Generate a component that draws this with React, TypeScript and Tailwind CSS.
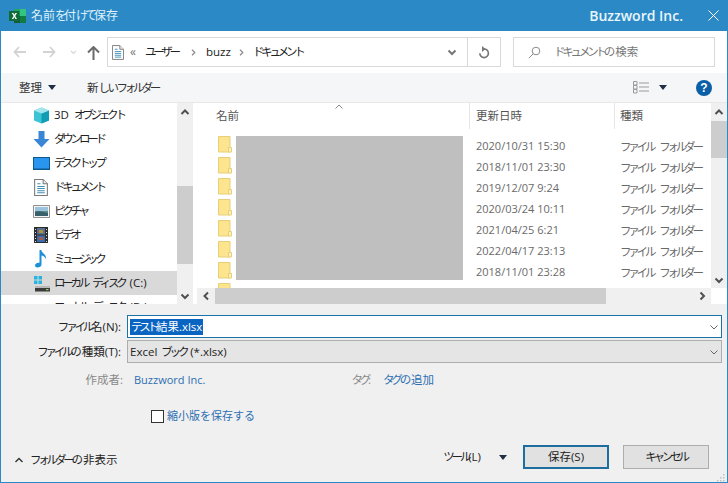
import React from 'react';

const rows = [
  '2020/10/31 15:30',
  '2018/11/01 23:30',
  '2019/12/07 9:24',
  '2020/03/24 10:11',
  '2021/04/25 6:21',
  '2022/04/17 23:13',
  '2018/11/01 23:28',
];

// Katakana in the original UI font is much narrower than in Noto, so squeeze those runs
const Jp = ({ children }: { children: string }) => (
  <>
    {children.split(/([\u30A0-\u30FF]+)/).map((part, i) =>
      i % 2 === 1 ? (
        <span key={i} className="tracking-[-3.2px]">{part}</span>
      ) : (
        <span key={i}>{part}</span>
      )
    )}
  </>
);

const Caret = ({ className = '' }: { className?: string }) => (
  <svg width="8" height="5" viewBox="0 0 8 5" className={className}>
    <path d="M0 0h8L4 5z" fill="#1f2f45" />
  </svg>
);

const Chevron = ({ dir, color = '#505050', width = 2 }: { dir: 'up' | 'down' | 'left' | 'right'; color?: string; width?: number }) => {
  const d = {
    up: 'M1.5 7 L5 3.5 L8.5 7',
    down: 'M1.5 3.5 L5 7 L8.5 3.5',
    left: 'M7 1.5 L3.5 5 L7 8.5',
    right: 'M3.5 1.5 L7 5 L3.5 8.5',
  }[dir];
  return (
    <svg width="10" height="10" viewBox="0 0 10 10">
      <path d={d} fill="none" stroke={color} strokeWidth={width} />
    </svg>
  );
};

const Crumb = () => (
  <svg width="5" height="7" viewBox="0 0 5 7">
    <path d="M1 .8 3.800 3.500 1 6.200" fill="none" stroke="#8a8a8a" strokeWidth="1.200" />
  </svg>
);

const DocIcon = ({ size = 14 }: { size?: number }) => (
  <svg width={size} height={size + 3} viewBox="0 0 13 16">
    <path d="M.5.5h8l4 4v11H.5z" fill="#fff" stroke="#7a7a7a" />
    <path d="M8.5.5v4h4" fill="#eee" stroke="#7a7a7a" />
    <path d="M3 4.5h3M3 7h7M3 9h7M3 11h7M3 13h7" stroke="#3f8fb5" />
  </svg>
);

const FolderIcon = () => (
  <svg width="14" height="17" viewBox="0 0 14 17" className="block shrink-0">
    <path d="M.5.5h11.500v15.500H.5z" fill="#fce58e" stroke="#e6cf78" />
    <path d="M10.500 11.500h3v4.500h-3z" fill="#fdf0bf" stroke="#e6cf78" />
  </svg>
);

const navItems: { label: string; icon: React.ReactNode }[] = [
  {
    label: '3D オブジェクト',
    icon: (
      <svg width="17" height="17" viewBox="0 0 17 17">
        <path d="M8.500.5 16 3.500v10L8.500 16.500 1 13.500v-10z" fill="#3cc4d4" />
        <path d="M8.500 6.500 16 3.500v10l-7.500 3z" fill="#119db5" />
        <path d="M8.500.5 16 3.500 8.500 6.500 1 3.500z" fill="#a5e6ee" />
      </svg>
    ),
  },
  {
    label: 'ダウンロード',
    icon: (
      <svg width="17" height="17" viewBox="0 0 17 17">
        <path d="M5.500 0h6v8h5L8.500 16.500.5 8h5z" fill="#3a86d6" />
      </svg>
    ),
  },
  {
    label: 'デスクトップ',
    icon: (
      <svg width="17" height="13" viewBox="0 0 17 13">
        <path d="M0 0h17v13H0z" fill="#0b5a8f" />
        <path d="M1 1h15v10.500H1z" fill="#2a95ee" />
      </svg>
    ),
  },
  { label: 'ドキュメント', icon: <DocIcon /> },
  {
    label: 'ピクチャ',
    icon: (
      <svg width="17" height="13" viewBox="0 0 17 13">
        <path d="M.5.5h16v12H.5z" fill="#f4f4f4" stroke="#8f8f8f" />
        <path d="M2 2h13v4H2z" fill="#9cc3dc" />
        <path d="M2 6h13v5H2z" fill="#5b8a8c" />
        <path d="M2 7c4-2 8 0 13 1v3H2z" fill="#39606a" />
      </svg>
    ),
  },
  {
    label: 'ビデオ',
    icon: (
      <svg width="14" height="16" viewBox="0 0 14 16">
        <path d="M0 0h14v16H0z" fill="#2c2c2c" />
        <path d="M3 1h8v6.500H3z" fill="#55718f" />
        <path d="M3 8.500h8V15H3z" fill="#3a6db0" />
        <path d="M5 3h4v3H5z" fill="#b88a3c" />
        <path d="M5 10h4v3H5z" fill="#a85a4a" />
        <path d="M1 2h1v1H1zM1 5h1v1H1zM1 8h1v1H1zM1 11h1v1H1zM1 14h1v1H1zM12 2h1v1h-1zM12 5h1v1h-1zM12 8h1v1h-1zM12 11h1v1h-1zM12 14h1v1h-1z" fill="#ddd" />
      </svg>
    ),
  },
  {
    label: 'ミュージック',
    icon: (
      <svg width="12" height="18" viewBox="0 0 12 18">
        <path d="M4.500 0h1.700c.3 3 5.300 4 4.800 9-.8-2-3-3.300-4.500-3.500v9c0 1.800-2 3-4 3-1.500 0-2.500-.8-2.500-2 0-1.700 2-3 4.500-2.700z" fill="#1b8fd8" />
      </svg>
    ),
  },
  {
    label: 'ローカル ディスク (C:)',
    icon: (
      <svg width="17" height="17" viewBox="0 0 17 17">
        <path d="M1 1h3.500v3.500H1zM5.500 1H9v3.500H5.500zM1 5.500h3.500V9H1zM5.500 5.500H9V9H5.500z" fill="#27b4dd" />
        <path d="M2 11h15v2H2z" fill="#b8b8b8" />
        <path d="M2 13h15v3.500H2z" fill="#3b3b3b" />
        <path d="M13 14h2.500v1.200H13z" fill="#7ed957" />
      </svg>
    ),
  },
  { label: 'ローカル ディスク (D:)', icon: null },
];

export default function App() {
  return (
    <div className="flex h-[483px] w-[728px] flex-col overflow-hidden border-x border-b border-[#2b8ac6] bg-[#f0f0f0] text-[11px] text-[#222] [font-family:'Open_Sans','Noto_Sans_CJK_JP',sans-serif]">
      {/* title bar */}
      <div className="flex h-[31px] shrink-0 items-center bg-[#2b8ac6] pl-2 pr-[6px] text-white">
        <svg width="17" height="16" viewBox="0 0 17 16">
          <path d="M5 1h6v7H5z" fill="#21a366" />
          <path d="M11 1h6v7h-6z" fill="#33c481" />
          <path d="M11 8h6v7h-6z" fill="#107c41" />
          <path d="M5 8h6v7H5z" fill="#185c37" />
          <path d="M0 3h10.500v10H0z" fill="#0f6b38" />
          <path d="M2.800 5h1.600l1 1.800L6.400 5H8L6.200 8 8 11H6.400L5.400 9.100 4.400 11H2.800l1.800-3z" fill="#fff" />
        </svg>
        <span className="ml-[5px] text-[12px] text-[#dff0fa]">
          名前<span className="tracking-[-3px]">を</span>付<span className="tracking-[-3px]">けて</span>保存
        </span>
        <span className="ml-auto text-[14px] font-semibold text-[#eaf5fc]">Buzzword Inc.</span>
        <svg width="11" height="11" viewBox="0 0 11 11" className="ml-[25px] mr-[2px]">
          <path d="M.5.5l10 10M10.500.5l-10 10" stroke="#fff" strokeWidth="1" />
        </svg>
      </div>

      {/* navigation row */}
      <div className="flex h-[42px] shrink-0 items-center bg-white">
        <svg width="13" height="12" viewBox="0 0 13 12" className="ml-[12px]">
          <path d="M6 1 1.500 6 6 11M1.500 6H13" fill="none" stroke="#d3d3d3" strokeWidth="1.800" />
        </svg>
        <svg width="13" height="12" viewBox="0 0 13 12" className="ml-[17px]">
          <path d="M7 1l4.500 5L7 11M11.500 6H0" fill="none" stroke="#d3d3d3" strokeWidth="1.800" />
        </svg>
        <svg width="7" height="5" viewBox="0 0 7 5" className="ml-[14px]">
          <path d="M1 1l2.500 2.500L6 1" fill="none" stroke="#d8d8d8" strokeWidth="1.200" />
        </svg>
        <svg width="13" height="14" viewBox="0 0 13 14" className="ml-[10px] mt-[2px]">
          <path d="M1 6.500 6.500 1 12 6.500M6.500 1v13" fill="none" stroke="#6b6b6b" strokeWidth="2" />
        </svg>
        <div className="ml-[7px] flex h-[30px] w-[394px] items-center border border-[#d9d9d9]">
          <span className="ml-[4px] flex"><DocIcon size={12} /></span>
          <span className="ml-[6px] text-[12px] text-[#777]">«</span>
          <span className="ml-[9px] text-[11.500px]"><Jp>ユーザー</Jp></span>
          <span className="ml-[13px] flex"><Crumb /></span>
          <span className="ml-[10px] text-[11.500px]">buzz</span>
          <span className="ml-[8px] flex"><Crumb /></span>
          <span className="ml-[9px] text-[11.500px]"><Jp>ドキュメント</Jp></span>
          <span className="ml-auto mr-[10px] flex"><Chevron dir="down" color="#777" /></span>
          <div className="flex h-full w-[33px] items-center justify-center border-l border-[#d9d9d9]">
            <svg width="12" height="13" viewBox="0 0 12 13">
              <path d="M6 3a4.300 4.300 0 1 1-4.200 4.300" fill="none" stroke="#777" strokeWidth="1.600" />
              <path d="M4 0v6l3.500-3z" fill="#777" />
            </svg>
          </div>
        </div>
        <div className="ml-[12px] flex h-[30px] w-[202px] items-center border border-[#d9d9d9] text-[11.500px] text-[#777]">
          <svg width="13" height="13" viewBox="0 0 13 13" className="ml-[14px]">
            <circle cx="8" cy="5" r="3.800" fill="none" stroke="#8a8a8a" />
            <path d="M5.200 7.800.8 12.200" stroke="#8a8a8a" />
          </svg>
          <span className="ml-[13px]"><Jp>ドキュメントの検索</Jp></span>
        </div>
      </div>

      {/* toolbar */}
      <div className="flex h-[30px] shrink-0 items-center border-b border-[#e8e8e8] bg-[#f5f6f7] text-[11.500px] text-[#333]">
        <span className="ml-[18px]">整理</span>
        <Caret className="ml-[6px]" />
        <span className="ml-[31px]">新<span className="tracking-[-2.500px]">しい</span><Jp>フォルダー</Jp></span>
        <svg width="16" height="13" viewBox="0 0 16 13" className="ml-auto">
          <path d="M.5.500h3.500v3.500H.5zM.5 4.500h3.500V8H.5zM.5 8.500h3.500V12H.5z" fill="none" stroke="#9a9a9a" />
          <path d="M6 2h10M6 6h10M6 10h10" stroke="#9a9a9a" />
        </svg>
        <Caret className="ml-[10px]" />
        <div className="ml-[29px] mr-[15px] flex h-[16px] w-[16px] items-center justify-center rounded-full bg-[#0a5fa8] text-[12px] font-bold text-white [font-family:'Liberation_Sans',sans-serif]">?</div>
      </div>

      {/* panes */}
      <div className="flex h-[201px] shrink-0 bg-white">
        <div className="h-full w-[176px] shrink-0 overflow-hidden text-[11.500px] text-[#222] [word-spacing:2px]">
          {navItems.map((item) => (
            <div
              key={item.label}
              className={`flex h-[24px] shrink-0 items-center ${item.label.includes('(C:)') ? 'bg-[#d9d9d9]' : ''}`}
            >
              <span className="flex w-[53px] shrink-0 justify-end pr-[4px]">
                <span className="flex w-[18px] justify-center">{item.icon}</span>
              </span>
              <span className="whitespace-nowrap"><Jp>{item.label}</Jp></span>
            </div>
          ))}
        </div>
        <div className="flex w-[16px] shrink-0 flex-col bg-[#f0f0f0]">
          <div className="flex h-[17px] shrink-0 items-center justify-center"><Chevron dir="up" /></div>
          <div className="mt-[66px] h-[78px] bg-[#cdcdcd]" />
          <div className="mt-auto flex h-[17px] shrink-0 items-center justify-center"><Chevron dir="down" /></div>
        </div>
        <div className="w-[4px] shrink-0 bg-white" />

        <div className="flex min-w-0 flex-1 flex-col">
          <div className="flex min-h-0 flex-1">
            <div className="flex min-w-0 flex-1 flex-col overflow-hidden">
              {/* column headers */}
              <div className="relative flex h-[26px] shrink-0 items-center text-[11.500px] text-[#555]">
                <span className="ml-[19px] w-[253px]">名前</span>
                <svg width="8" height="5" viewBox="0 0 8 5" className="absolute left-[138px] top-[1px]">
                  <path d="M.5 4.500 4 1l3.500 3.500" fill="none" stroke="#888" />
                </svg>
                <span className="flex h-full w-[145px] items-center border-l border-[#e5e5e5] pl-[6px]">更新日時</span>
                <span className="flex h-full items-center border-l border-[#e5e5e5] pl-[5px]">種類</span>
              </div>
              {/* file rows */}
              <div className="flex min-h-0 flex-1 overflow-hidden pt-[7px] text-[#6a6a6a]">
                <div className="ml-[21px] flex w-[18px] shrink-0 flex-col gap-[4px]">
                  {rows.map((r) => <FolderIcon key={r} />)}
                  <FolderIcon />
                </div>
                <div className="h-[144px] w-[227px] shrink-0 bg-[#bfbfbf]" />
                <div className="ml-[13px] flex w-[144px] shrink-0 flex-col">
                  {rows.map((r) => (
                    <div key={r} className="flex h-[21px] items-center whitespace-nowrap">{r}</div>
                  ))}
                </div>
                <div className="flex flex-col text-[11.500px] [word-spacing:3px]">
                  {rows.map((r) => (
                    <div key={r} className="flex h-[21px] items-center whitespace-nowrap">
                      <span><Jp>ファイル フォルダー</Jp></span>
                    </div>
                  ))}
                </div>
              </div>
            </div>
            <div className="flex w-[16px] shrink-0 flex-col bg-[#f0f0f0]">
              <div className="flex h-[18px] shrink-0 items-center justify-center"><Chevron dir="up" /></div>
              <div className="h-[37px] bg-[#cdcdcd]" />
              <div className="mt-auto flex h-[17px] shrink-0 items-center justify-center"><Chevron dir="down" /></div>
            </div>
          </div>
          {/* horizontal scrollbar */}
          <div className="flex h-[16px] shrink-0 bg-white">
            <div className="flex min-w-0 flex-1 bg-[#f0f0f0]">
              <div className="flex w-[18px] shrink-0 items-center justify-center"><Chevron dir="left" /></div>
              <div className="h-full w-[391px] bg-[#cdcdcd]" />
              <div className="ml-auto flex w-[18px] shrink-0 items-center justify-center"><Chevron dir="right" /></div>
            </div>
            <div className="w-[16px] shrink-0" />
          </div>
        </div>
      </div>

      {/* save form */}
      <div className="flex min-h-0 flex-1 flex-col pt-[11px] text-[11.500px]">
        <div className="flex h-[23px] items-center">
          <span className="w-[120px] text-right"><Jp>ファイル</Jp>名(N):</span>
          <div className="ml-[6px] flex h-full w-[595px] items-center border border-[#1a72a8] bg-white pl-[2px]">
            <span className="bg-[#0a64c2] px-px leading-[16px] text-white"><Jp>テスト</Jp>結果.xlsx</span>
            <span className="ml-auto mr-[2px] flex"><Chevron dir="down" color="#666" width={1} /></span>
          </div>
        </div>
        <div className="mt-[2px] flex h-[23px] items-center">
          <span className="w-[120px] text-right"><Jp>ファイル</Jp>の種類(T):</span>
          <div className="ml-[6px] flex h-full w-[595px] items-center border border-[#adadad] bg-[#e5e5e5] pl-[2px] [word-spacing:1px]">
            <span>Excel <Jp>ブック</Jp> (*.xlsx)</span>
            <span className="ml-auto mr-[2px] flex"><Chevron dir="down" color="#666" width={1} /></span>
          </div>
        </div>
        <div className="mt-[6px] flex h-[22px] items-center text-[#888]">
          <span className="w-[122px] text-right">作成者:</span>
          <span className="ml-[11px] text-[11px] text-[#2d6fb0]">Buzzword Inc.</span>
          <span className="ml-[146px]"><Jp>タグ</Jp>:</span>
          <span className="ml-[12px] text-[#2d6fb0]"><Jp>タグ</Jp>の追加</span>
        </div>
        <div className="mt-[17px] flex items-center pl-[150px]">
          <span className="h-[13px] w-[13px] border border-[#333] bg-white" />
          <span className="ml-[3px] text-[11px] text-[#2d6fb0]">縮小版を保存する</span>
        </div>
        <div className="relative mt-[20px] flex h-[25px] items-center">
          <span className="ml-[13px] mt-[6px] flex"><Chevron dir="up" color="#333" width={1.400} /></span>
          <span className="ml-[6px] mt-[6px]"><Jp>フォルダー</Jp>の非表示</span>
          <span className="ml-auto"><Jp>ツール</Jp>(L)</span>
          <Caret className="ml-[18px]" />
          <button className="ml-[16px] h-[24px] w-[86px] border-2 border-[#1d6e9f] bg-[#e1e1e1] text-[11.500px]">保存(S)</button>
          <button className="ml-[14px] mr-[18px] h-[24px] w-[86px] border border-[#adadad] bg-[#e1e1e1] text-[11.500px]"><Jp>キャンセル</Jp></button>
          <svg width="9" height="9" viewBox="0 0 9 9" className="absolute bottom-[-12px] right-[2px]">
            <path d="M7 1h1.500v1.500H7zM4 4h1.500v1.500H4zM7 4h1.500v1.500H7zM1 7h1.500v1.500H1zM4 7h1.500v1.500H4zM7 7h1.500v1.500H7z" fill="#c0c0c0" />
          </svg>
        </div>
      </div>
    </div>
  );
}
